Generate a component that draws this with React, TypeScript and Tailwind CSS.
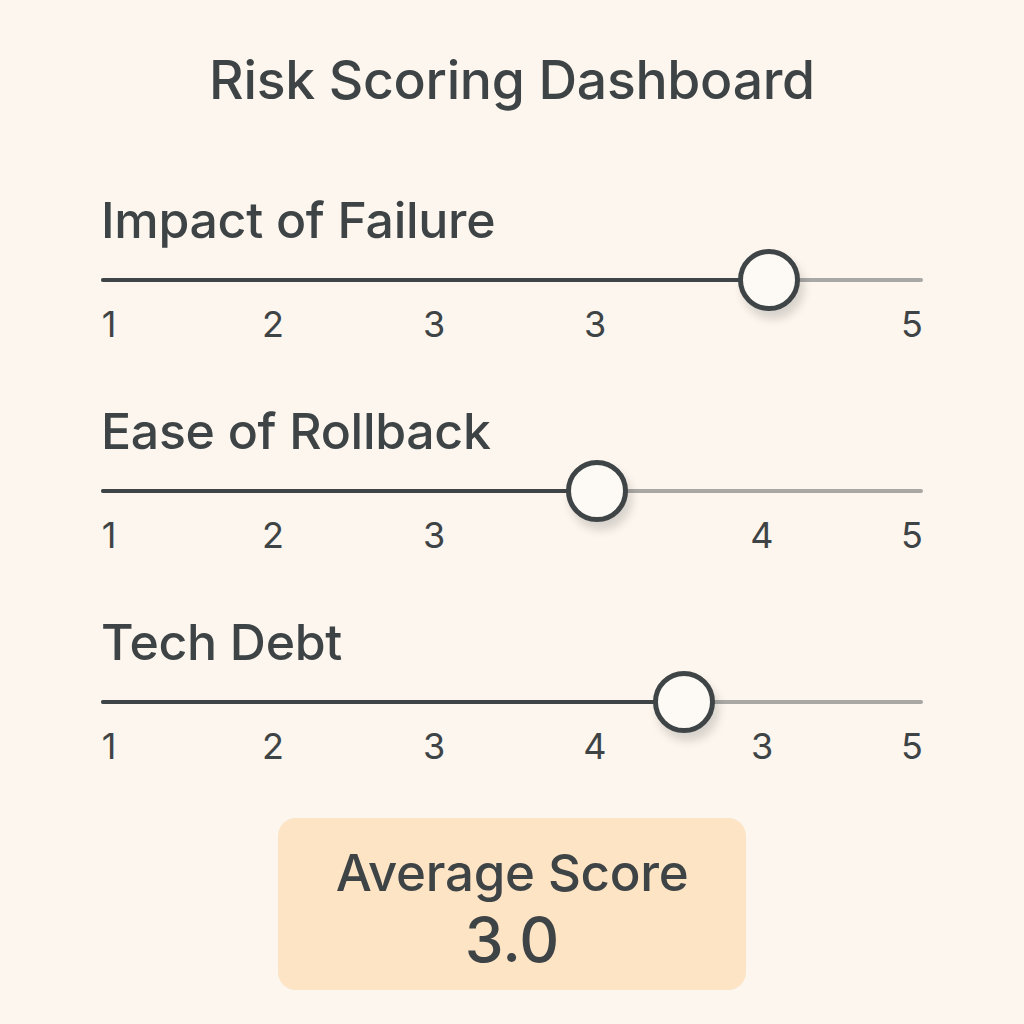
const font = { fontFamily: 'Inter, "Noto Sans", sans-serif' };

type Tick = { label: string; pos: string };

function Slider({ title, fill, thumb, ticks }: { title: string; fill: string; thumb: string; ticks: Tick[] }) {
  return (
    <div className="flex flex-col">
      <div className="h-[50px] text-[50px] font-medium leading-[50px] text-[#3e4446] tracking-[-0.3px]">{title}</div>
      <div className="relative mt-[5px] h-[60px]">
        <div className="absolute left-0 right-0 top-[28px] h-[4px] rounded-full bg-[#a9a8a4]" />
        <div className={`absolute left-0 top-[28px] h-[4px] rounded-full bg-[#3f4547] ${fill}`} />
        <div
          className={`absolute -top-[1px] h-[62px] w-[62px] -translate-x-1/2 rounded-full border-[5px] border-[#3f4547] bg-[#fdfaf5] shadow-[4px_8px_10px_rgba(0,0,0,0.15)] ${thumb}`}
        />
      </div>
      <div className="relative -mt-[6px] h-[40px] text-[36px] leading-[40px] text-[#3e4446]">
        {ticks.map((t, i) => (
          <span key={i} className={`absolute top-0 -translate-x-1/2 ${t.pos}`}>
            {t.label}
          </span>
        ))}
      </div>
    </div>
  );
}

export default function App() {
  return (
    <div className="min-h-[1024px] w-full bg-[#fcf6ee]" style={font}>
      <div className="mx-auto flex w-[822px] flex-col pt-[50px]">
        <h1 className="text-center text-[53.5px] font-medium leading-[60px] text-[#3e4446] tracking-[-0.3px]">
          Risk Scoring Dashboard
        </h1>

        <div className="mt-[85px] flex flex-col gap-[62px]">
          <Slider
            title="Impact of Failure"
            fill="w-[668px]"
            thumb="left-[668px]"
            ticks={[
              { label: '1', pos: 'left-[8px]' },
              { label: '2', pos: 'left-[172px]' },
              { label: '3', pos: 'left-[333px]' },
              { label: '3', pos: 'left-[494px]' },
              { label: '5', pos: 'left-[811px]' },
            ]}
          />
          <Slider
            title="Ease of Rollback"
            fill="w-[496px]"
            thumb="left-[496px]"
            ticks={[
              { label: '1', pos: 'left-[8px]' },
              { label: '2', pos: 'left-[172px]' },
              { label: '3', pos: 'left-[333px]' },
              { label: '4', pos: 'left-[661px]' },
              { label: '5', pos: 'left-[811px]' },
            ]}
          />
          <Slider
            title="Tech Debt"
            fill="w-[583px]"
            thumb="left-[583px]"
            ticks={[
              { label: '1', pos: 'left-[8px]' },
              { label: '2', pos: 'left-[172px]' },
              { label: '3', pos: 'left-[333px]' },
              { label: '4', pos: 'left-[494px]' },
              { label: '3', pos: 'left-[661px]' },
              { label: '5', pos: 'left-[811px]' },
            ]}
          />
        </div>

        <div className="mx-auto mt-[52px] flex h-[172px] w-[468px] flex-col items-center rounded-[18px] bg-[#fde4c5] pt-[27px] text-[#3e4446]">
          <div className="text-[51px] font-medium leading-[56px] tracking-[-0.3px]">Average Score</div>
          <div className="mt-[7px] text-[62px] font-medium leading-[64px]">3.0</div>
        </div>
      </div>
    </div>
  );
}
